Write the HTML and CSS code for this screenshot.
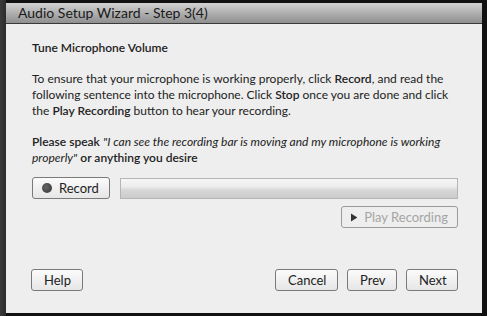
FILE: index.html
```html
<!DOCTYPE html>
<html lang="en">
<head>
  <meta charset="UTF-8">
  <title>Audio Setup Wizard</title>
  <link rel="stylesheet" href="styles.css">
</head>
<body>
  <div class="dialog">
    <div class="titlebar">Audio Setup Wizard - Step 3(4)</div>

    <div class="content">
      <h1 class="heading">Tune Microphone Volume</h1>

      <p class="text">To ensure that your microphone is working properly, click <b>Record</b>, and read the following sentence into the microphone. Click <b>Stop</b> once you are done and click the <b>Play Recording</b> button to hear your recording.</p>

      <p class="text"><b>Please speak</b> <i>"I can see the recording bar is moving and my microphone is working properly"</i> <b>or anything you desire</b></p>

      <div class="record-row">
        <button class="btn record-btn"><span class="dot"></span>Record</button>
        <div class="level-bar"></div>
      </div>

      <div class="play-row">
        <button class="btn play-btn" disabled>
          <svg width="7" height="9" viewBox="0 0 7 9"><path d="M0 0 L7 4.5 L0 9 Z" fill="#333"/></svg>
          <span>Play Recording</span>
        </button>
      </div>

      <div class="footer">
        <button class="btn help-btn">Help</button>
        <div class="nav">
          <button class="btn">Cancel</button>
          <button class="btn">Prev</button>
          <button class="btn">Next</button>
        </div>
      </div>
    </div>
  </div>
</body>
</html>
```

FILE: styles.css
```css
body {
  margin: 0;
  width: 487px;
  height: 316px;
  background: linear-gradient(90deg, #3a3a3a 0, #2c2c2c 6px, #111 6px);
  font-family: Lato, "Liberation Sans", sans-serif;
  overflow: hidden;
}

.dialog {
  margin: 3px 5px 0 6px;
  height: 310px;
  background: #eeeeee;
  display: flex;
  flex-direction: column;
}

.titlebar {
  height: 20px;
  line-height: 20px;
  padding-left: 12px;
  font-size: 14px;
  color: #1a1a1a;
  background: linear-gradient(#d2d2d2, #a9a9a9 60%, #8f8f8f);
  border-bottom: 1px solid #3a3a3a;
}

.content {
  flex: 1;
  padding: 16px 24px 0 26px;
  display: flex;
  flex-direction: column;
}

.heading {
  margin: 0 0 15px;
  font-size: 12px;
  font-weight: 600;
  color: #222;
  line-height: 16px;
}

.text {
  margin: 0 0 15px;
  font-size: 12px;
  line-height: 16px;
  color: #222;
}

.text b {
  font-weight: 600;
}

.btn {
  font-family: inherit;
  font-size: 13px;
  color: #222;
  height: 22px;
  padding: 0 12px;
  border: 1px solid #7a7a7a;
  border-radius: 3px;
  background: linear-gradient(#fbfbfb, #e6e6e6);
  white-space: nowrap;
}

.record-row {
  margin-top: -4px;
  display: flex;
  align-items: center;
  gap: 10px;
}

.record-btn {
  width: 78px;
  display: flex;
  align-items: center;
  gap: 7px;
  padding: 0 9px;
}

.dot {
  width: 10px;
  height: 10px;
  border-radius: 50%;
  background: radial-gradient(circle at 40% 40%, #666, #333);
}

.level-bar {
  flex: 1;
  height: 19px;
  border: 1px solid #b5b5b5;
  background: linear-gradient(#f6f6f6, #ececec 40%, #d6d6d6 60%, #cccccc);
}

.play-row {
  display: flex;
  justify-content: flex-end;
  margin-top: 7px;
}

.play-btn {
  width: 117px;
  color: #a5a5a5;
  border-color: #9a9a9a;
  background: #eeeeee;
  display: flex;
  align-items: center;
  gap: 7px;
  padding: 0 9px;
}

.footer {
  margin-top: auto;
  margin-bottom: 22px;
  display: flex;
  justify-content: space-between;
  align-items: center;
}

.help-btn {
  width: 52px;
  margin-left: -1px;
}

.nav {
  display: flex;
  gap: 9px;
}

.nav .btn:nth-child(1) { width: 63px; }
.nav .btn:nth-child(2) { width: 50px; }
.nav .btn:nth-child(3) { width: 52px; }
```
